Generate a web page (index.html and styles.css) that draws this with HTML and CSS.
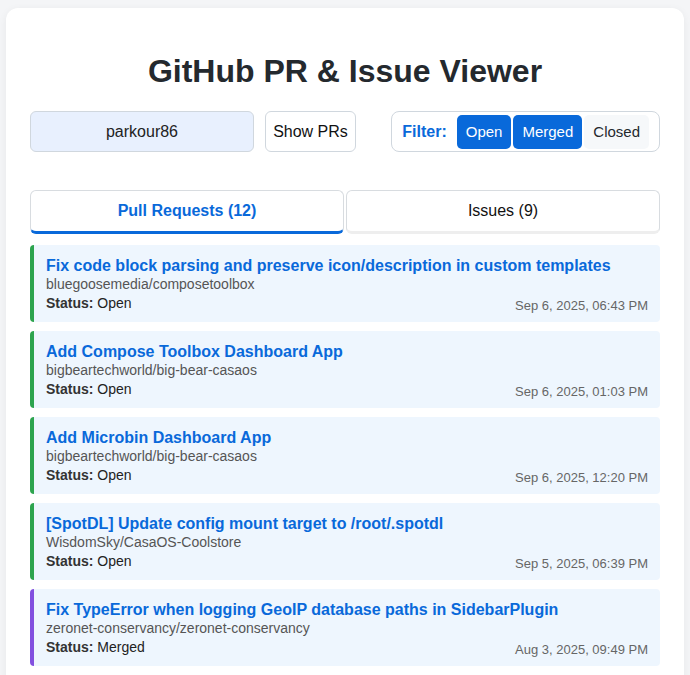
FILE: index.html
```html
<!DOCTYPE html>
<html lang="en">
<head>
<meta charset="utf-8">
<title>GitHub PR & Issue Viewer</title>
<link rel="stylesheet" href="styles.css">
</head>
<body>
<div class="card">
  <h1 class="title">GitHub PR &amp; Issue Viewer</h1>
  <div class="controls">
    <div class="search">
      <input class="user-input" type="text" value="parkour86">
      <button class="show-btn">Show PRs</button>
    </div>
    <div class="filter">
      <span class="filter-label">Filter:</span>
      <button class="chip chip-on">Open</button>
      <button class="chip chip-on">Merged</button>
      <button class="chip">Closed</button>
    </div>
  </div>
  <div class="tabs">
    <button class="tab tab-active">Pull Requests (12)</button>
    <button class="tab">Issues (9)</button>
  </div>
  <div class="list">
    <div class="item item-open">
      <div class="item-title">Fix code block parsing and preserve icon/description in custom templates</div>
      <div class="item-repo">bluegoosemedia/composetoolbox</div>
      <div class="item-meta"><span class="status"><b>Status:</b> Open</span><span class="date">Sep 6, 2025, 06:43 PM</span></div>
    </div>
    <div class="item item-open">
      <div class="item-title">Add Compose Toolbox Dashboard App</div>
      <div class="item-repo">bigbeartechworld/big-bear-casaos</div>
      <div class="item-meta"><span class="status"><b>Status:</b> Open</span><span class="date">Sep 6, 2025, 01:03 PM</span></div>
    </div>
    <div class="item item-open">
      <div class="item-title">Add Microbin Dashboard App</div>
      <div class="item-repo">bigbeartechworld/big-bear-casaos</div>
      <div class="item-meta"><span class="status"><b>Status:</b> Open</span><span class="date">Sep 6, 2025, 12:20 PM</span></div>
    </div>
    <div class="item item-open">
      <div class="item-title">[SpotDL] Update config mount target to /root/.spotdl</div>
      <div class="item-repo">WisdomSky/CasaOS-Coolstore</div>
      <div class="item-meta"><span class="status"><b>Status:</b> Open</span><span class="date">Sep 5, 2025, 06:39 PM</span></div>
    </div>
    <div class="item item-merged">
      <div class="item-title">Fix TypeError when logging GeoIP database paths in SidebarPlugin</div>
      <div class="item-repo">zeronet-conservancy/zeronet-conservancy</div>
      <div class="item-meta"><span class="status"><b>Status:</b> Merged</span><span class="date">Aug 3, 2025, 09:49 PM</span></div>
    </div>
  </div>
</div>
</body>
</html>
```
FILE: styles.css
```css
* { box-sizing: border-box; }
html, body { margin: 0; padding: 0; }
body {
  background: #f4f5f7;
  font-family: "Liberation Sans", Arial, sans-serif;
  color: #24292e;
  overflow: hidden;
}
.card {
  margin: 8px 6px;
  background: #fff;
  border-radius: 12px;
  box-shadow: 0 2px 8px rgba(0,0,0,0.06);
  padding: 24px 24px 24px;
  min-height: 700px;
}
.title {
  margin: 17px 0 18px;
  text-align: center;
  font-size: 32px;
  line-height: 44px;
  font-weight: bold;
  color: #24292e;
}
.controls {
  display: flex;
  justify-content: space-between;
  align-items: center;
}
.search { display: flex; gap: 11px; }
.user-input {
  width: 224px;
  height: 41px;
  border: 1px solid #d0d7de;
  border-radius: 6px;
  background: #e8f0fe;
  font: 16px "Liberation Sans", Arial, sans-serif;
  color: #222;
  text-align: center;
  padding: 0 8px;
}
.show-btn {
  width: 91px;
  height: 41px;
  border: 1px solid #d0d7de;
  border-radius: 6px;
  background: #fff;
  font: 16px "Liberation Sans", Arial, sans-serif;
  color: #111;
  padding: 0;
}
.filter {
  display: flex;
  align-items: center;
  gap: 2px;
  height: 41px;
  border: 1px solid #d0d7de;
  border-radius: 8px;
  padding: 0 10px 0 10px;
}
.filter-label {
  color: #0969da;
  font-weight: bold;
  font-size: 16px;
  margin-right: 8px;
}
.chip {
  height: 34px;
  border: none;
  border-radius: 5px;
  background: #f6f8fa;
  color: #24292e;
  font: 15px "Liberation Sans", Arial, sans-serif;
  padding: 0 9px;
}
.chip-on { background: #0969da; color: #fff; }
.tabs {
  display: flex;
  gap: 2px;
  margin-top: 38px;
}
.tab {
  flex: 1;
  height: 44px;
  background: #fff;
  border: 1px solid #d8dce0;
  border-bottom: 3px solid #eeeeee;
  border-radius: 6px;
  font: 16px "Liberation Sans", Arial, sans-serif;
  color: #111;
}
.tab-active {
  color: #0969da;
  font-weight: bold;
  border-bottom-color: #0969da;
}
.list {
  margin-top: 11px;
  display: flex;
  flex-direction: column;
  gap: 9px;
}
.item {
  background: #eef6fe;
  border-left: 4px solid #2da44e;
  border-radius: 4px;
  padding: 11px 12px 10px 12px;
}
.item-merged { border-left-color: #8250df; }
.item-title {
  color: #0969da;
  font-weight: bold;
  font-size: 16px;
  line-height: 20px;
}
.item-repo {
  font-size: 14px;
  line-height: 17px;
  color: #555;
}
.item-meta {
  display: flex;
  justify-content: space-between;
  align-items: flex-end;
  margin-top: 1px;
}
.status { font-size: 14px; line-height: 18px; color: #222; }
.status b { color: #333; }
.date { font-size: 13px; line-height: 17px; color: #666; margin-bottom: -2px; }
```
